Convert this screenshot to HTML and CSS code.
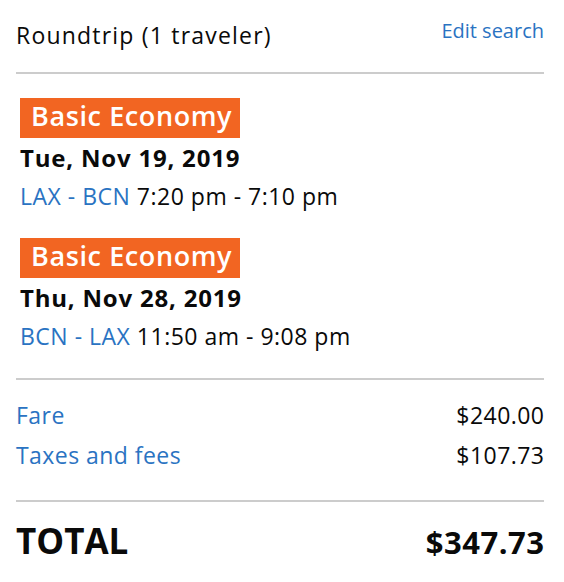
FILE: index.html
```html
<!DOCTYPE html>
<html>
<head>
<meta charset="utf-8">
<link rel="stylesheet" href="styles.css">
</head>
<body>
<div class="summary">
  <div class="header">
    <div class="title">Roundtrip (1 traveler)</div>
    <a class="edit" href="#">Edit search</a>
  </div>
  <div class="segments">
    <div class="segment">
      <div class="badge">Basic Economy</div>
      <div class="date">Tue, Nov 19, 2019</div>
      <div class="route"><span class="link">LAX - BCN</span> 7:20 pm - 7:10 pm</div>
    </div>
    <div class="segment">
      <div class="badge">Basic Economy</div>
      <div class="date">Thu, Nov 28, 2019</div>
      <div class="route"><span class="link">BCN - LAX</span> 11:50 am - 9:08 pm</div>
    </div>
  </div>
  <div class="prices">
    <div class="row"><span class="link">Fare</span><span class="amount">$240.00</span></div>
    <div class="row"><span class="link">Taxes and fees</span><span class="amount">$107.73</span></div>
  </div>
  <div class="total">
    <span class="total-label">TOTAL</span><span class="total-amount">$347.73</span>
  </div>
</div>
</body>
</html>
```

FILE: styles.css
```css
html, body {
  margin: 0;
  padding: 0;
  background: #fff;
}
body {
  font-family: "Open Sans", "Liberation Sans", sans-serif;
  color: #0a0a0a;
}
.summary {
  padding: 0 20px 0 16px;
}
.header {
  display: flex;
  justify-content: space-between;
  align-items: flex-start;
  padding-top: 19px;
  height: 53px;
  border-bottom: 2px solid #cccccc;
}
.title {
  font-size: 23px;
  line-height: 32px;
  letter-spacing: 1.2px;
}
.edit {
  margin-top: 1px;
  font-size: 20px;
  line-height: 22px;
  color: #2a73c2;
  text-decoration: none;
}
.link {
  color: #2a73c2;
}
.segments {
  padding: 24px 0 24px 4px;
  border-bottom: 2px solid #cccccc;
  display: flex;
  flex-direction: column;
  gap: 24px;
}
.segment {
  display: flex;
  flex-direction: column;
}
.badge {
  align-self: flex-start;
  background: #f26522;
  color: #fff;
  font-size: 27px;
  font-weight: 600;
  letter-spacing: 0.6px;
  line-height: 36px;
  height: 36px;
  padding: 0 8px 4px 11px;
}
.date {
  font-size: 24px;
  font-weight: 700;
  letter-spacing: 0.8px;
  line-height: 30px;
  margin-top: 5px;
}
.route {
  font-size: 23px;
  letter-spacing: 0.5px;
  line-height: 36px;
  margin-top: 5px;
}
.prices {
  padding: 15px 0 25px;
  border-bottom: 2px solid #cccccc;
}
.row {
  display: flex;
  justify-content: space-between;
  font-size: 23px;
  letter-spacing: 0.45px;
  line-height: 40px;
}
.amount {
  margin-right: -0.45px;
}
.total {
  display: flex;
  justify-content: space-between;
  align-items: baseline;
  font-weight: 700;
  line-height: 44px;
  padding-top: 17px;
}
.total-label {
  font-size: 35px;
}
.total-amount {
  font-size: 31px;
  letter-spacing: 0.5px;
  margin-right: -0.5px;
}
```
